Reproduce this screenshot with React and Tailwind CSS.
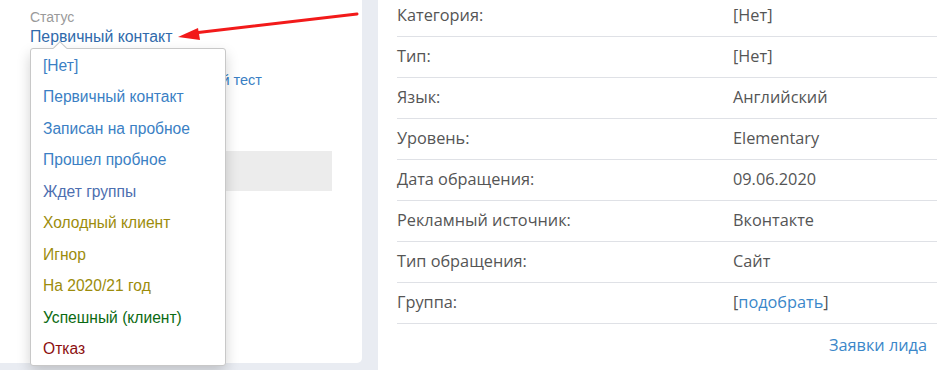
import React from 'react';

const statuses = [
    { name: '[Нет]', color: 'text-[#3b7fc4]' },
    { name: 'Первичный контакт', color: 'text-[#3b7fc4]' },
    { name: 'Записан на пробное', color: 'text-[#3b7fc4]' },
    { name: 'Прошел пробное', color: 'text-[#3b7fc4]' },
    { name: 'Ждет группы', color: 'text-[#4d6fb0]' },
    { name: 'Холодный клиент', color: 'text-[#9c8c0c]' },
    { name: 'Игнор', color: 'text-[#9c8c0c]' },
    { name: 'На 2020/21 год', color: 'text-[#9c8c0c]' },
    { name: 'Успешный (клиент)', color: 'text-[#0b6a12]' },
    { name: 'Отказ', color: 'text-[#8c0f0f]' },
];

const fields = [
    { label: 'Категория:', value: '[Нет]' },
    { label: 'Тип:', value: '[Нет]' },
    { label: 'Язык:', value: 'Английский' },
    { label: 'Уровень:', value: 'Elementary' },
    { label: 'Дата обращения:', value: '09.06.2020' },
    { label: 'Рекламный источник:', value: 'Вконтакте' },
    { label: 'Тип обращения:', value: 'Сайт' },
    { label: 'Группа:', value: 'подобрать', link: true },
];

const App = () => {
    return (
        <div className="relative flex h-[370px] w-[951px] overflow-hidden bg-[#e9ecf2]">
            {/* left card */}
            <div className="relative h-[363px] w-[362px] shrink-0 rounded-br-[5px] bg-white pl-[30px] font-['Liberation_Sans',Arial,sans-serif]">
                <div className="pt-[8px] text-[14px] leading-[18px] text-[#9a9a9a]">Статус</div>
                <div className="mt-[2px] text-[15.8px] leading-[18px] text-[#2f6aab]">Первичный контакт</div>
                <div className="mt-[25px] w-[232px] text-right text-[14.5px] leading-[18px] text-[#3b7fc4]">Пройти вступительный тест</div>
                <div className="mt-[62px] h-[40px] w-[302px] bg-[#ececec]" />

                {/* status dropdown */}
                <div className="absolute left-[30px] top-[48px] w-[196px] rounded-[3px] border border-[#c8c8c8] bg-white py-[1px] shadow-[0_6px_14px_rgba(0,0,0,0.18)]">
                    <div className="absolute left-[24px] top-[-6px] h-[10px] w-[10px] rotate-45 border-l border-t border-[#c8c8c8] bg-white" />
                    {statuses.map((s) => (
                        <div key={s.name} className={`relative flex h-[31.45px] items-center px-[12px] text-[15.6px] ${s.color}`}>
                            {s.name}
                        </div>
                    ))}
                </div>
            </div>

            {/* right card */}
            <div className="ml-[16px] flex-1 bg-white pl-[19px] pr-[14px] font-['Open_Sans',sans-serif] text-[16.3px] text-[#555]">
                <div className="mt-[-4px]">
                    {fields.map((f) => (
                        <div key={f.label} className="flex h-[41px] items-center border-b border-[#dfe1e6] pb-[1px]">
                            <div className="w-[336px]">{f.label}</div>
                            <div>
                                {f.link ? (
                                    <span>[<span className="text-[#3b87c9]">{f.value}</span>]</span>
                                ) : (
                                    f.value
                                )}
                            </div>
                        </div>
                    ))}
                </div>
                <div className="flex justify-end pr-[10px] pt-[9px] text-[#3b87c9]">Заявки лида</div>
            </div>

            {/* annotation arrow */}
            <svg className="absolute left-0 top-0" width="951" height="370">
                <line x1="357" y1="14" x2="194" y2="33" stroke="#f21a1a" strokeWidth="3" strokeLinecap="round" />
                <polygon points="178,37 198,28 200,40" fill="#f21a1a" />
            </svg>
        </div>
    );
};

export default App;
